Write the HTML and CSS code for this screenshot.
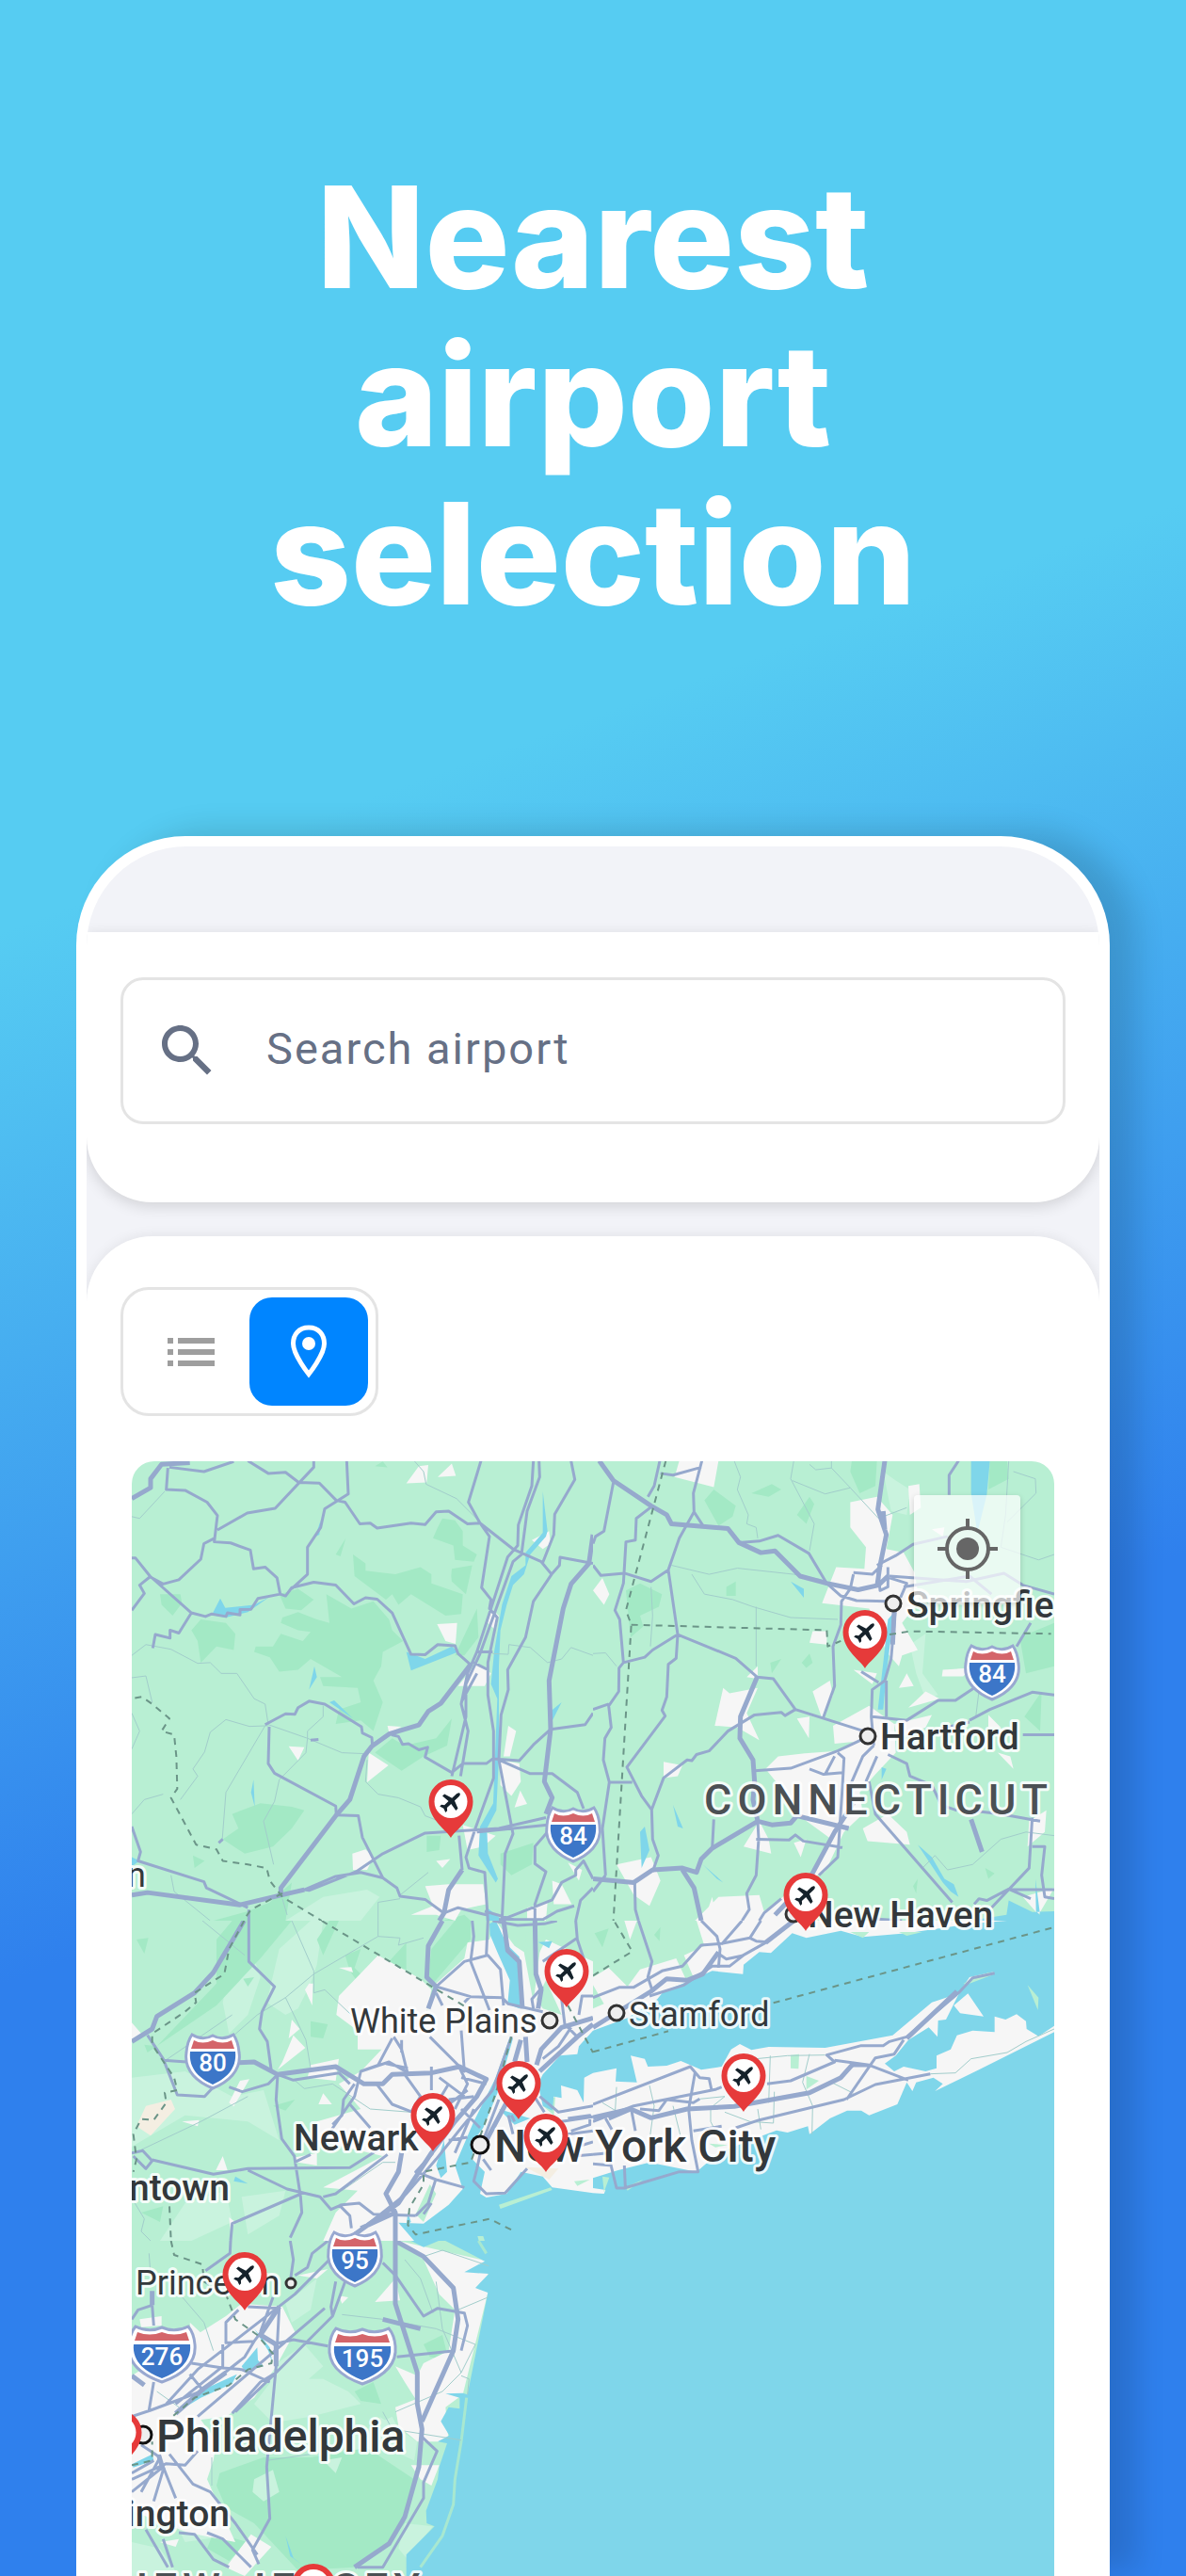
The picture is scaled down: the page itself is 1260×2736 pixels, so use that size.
FILE: index.html
```html
<!DOCTYPE html>
<html lang="en">
<head>
<meta charset="utf-8">
<meta name="viewport" content="width=device-width, initial-scale=1">
<title>Nearest airport selection</title>
<link rel="stylesheet" href="styles.css">
</head>
<body>
<main class="promo">
  <h1 class="headline">Nearest<br>airport<br>selection</h1>

  <section class="phone" aria-label="App preview">
    <div class="screen">
      <div class="status-bar"></div>

      <header class="toolbar">
        <label class="search">
          <svg class="search-icon" viewBox="0 0 24 24" aria-hidden="true"><path d="M15.5 14h-.79l-.28-.27C15.41 12.59 16 11.11 16 9.5 16 5.91 13.09 3 9.5 3S3 5.91 3 9.5 5.91 16 9.5 16c1.61 0 3.09-.59 4.23-1.57l.27.28v.79l5 4.99L20.49 19l-4.99-5zm-6 0C7.01 14 5 11.99 5 9.5S7.01 5 9.5 5 14 7.01 14 9.5 11.99 14 9.5 14z"/></svg>
          <input class="search-input" type="search" placeholder="Search airport" aria-label="Search airport">
        </label>
      </header>

      <section class="results">
        <div class="view-toggle" role="group" aria-label="View">
          <button class="toggle-option" type="button" aria-label="List" aria-pressed="false">
            <svg class="toggle-icon" viewBox="0 0 60 60" aria-hidden="true"><path d="M6 15h6v6H6zM17 15h39v6H17zM6 27h6v6H6zM17 27h39v6H17zM6 39h6v6H6zM17 39h39v6H17z"/></svg>
          </button>
          <button class="toggle-option toggle-option--active" type="button" aria-label="Map" aria-pressed="true">
            <svg class="toggle-icon" viewBox="0 0 60 60" aria-hidden="true"><path d="M30 4C41 4 46.500 12 46.500 21C46.500 33 30 53.500 30 53.500S13.500 33 13.500 21C13.500 12 19 4 30 4Z" fill="none" stroke="currentColor" stroke-width="5"/><circle cx="30" cy="21" r="7"/></svg>
          </button>
        </div>

        <div class="map">
          <svg class="map-canvas" viewBox="140 1552 980 1184" role="img" aria-label="Map of airports around New York City">
            <defs>
              <g id="pin">
                <path d="M0 0C-3-7-23.500-19-23.500-38.500A23.500 23.500 0 0 1 23.500-38.500C23.500-19 3-7 0 0Z" fill="#e63a3a"/>
                <circle cy="-38.500" r="17.500" fill="#fff"/>
                <path transform="translate(0 -38.500) rotate(47)" d="M0-13C1.300-13 2-11 2-9V-3.500L10.500-0.500V2.500L2 1.500V7.500L4.500 9.500V12L0 10.500L-4.500 12V9.500L-2 7.500V1.500L-10.500 2.500V-0.500L-2-3.500V-9C-2-11-1.300-13 0-13Z" fill="#15222b"/>
              </g>
              <g id="shield">
                <path d="M-22-27Q-11-20 0-26Q11-20 22-27Q27-20 28-8C31 12 15 24 0 30C-15 24-31 12-28-8Q-27-20-22-27Z" fill="#fff" stroke="#98a8d0" stroke-width="3"/>
                <path d="M-20-21Q-11-16 0-21Q11-16 20-21L23-12H-23Z" fill="#d4656a"/>
                <path d="M-24-9H24C26 10 13 20 0 26C-13 20-26 10-24-9Z" fill="#3c76c8"/>
              </g>
              <g id="shield-wide">
                <path d="M-28-28Q-14-21 0-27Q14-21 28-28Q34-21 35-9C37 12 20 24 0 31C-20 24-37 12-35-9Q-34-21-28-28Z" fill="#fff" stroke="#98a8d0" stroke-width="3"/>
                <path d="M-26-22Q-13-17 0-22Q13-17 26-22L29-13H-29Z" fill="#d4656a"/>
                <path d="M-30-9H30C32 10 16 21 0 27C-16 21-32 10-30-9Z" fill="#3c76c8"/>
              </g>
            </defs>

            <rect class="land" x="140" y="1552" width="980" height="1184"/>
            <rect class="water" x="628" y="2380" width="492" height="356"/>

            <!-- Catskills and the upper Hudson -->
            <svg x="130" y="1540" width="500" height="500" viewBox="0 0 1500 1306" preserveAspectRatio="none">
              <path class="forest" d="M735 290L775 315V335L870 345L950 325L985 345V370L1085 400L1080 455L1030 460L920 400L880 430L860 400L840 415L740 350ZM990 245L1005 215L1020 190L1060 195L1085 225V265L1130 290L1120 310L1060 305L1055 265ZM1048 350L1050 330L1115 320L1095 400L1050 365ZM650 400L730 440L800 420L850 470L860 500L895 530L830 560L825 600L800 640L830 700L800 780L760 750L680 760L690 720L760 700L750 660L640 655L630 630L700 630L600 580L560 610L500 615L470 575L420 560L425 545L480 545L505 510L575 530L600 505L560 500L505 480L510 465L560 450L620 470L660 480ZM500 400L560 385L610 415L570 445L520 440ZM220 500L250 470L330 480L360 510L355 555L300 545L250 590L240 530ZM120 400L185 400L190 425L160 460L125 430ZM1060 570L1130 440L1135 520L1090 570ZM350 1010L440 980L540 990L580 1000L540 1050L480 1100L390 1120L320 1080L370 1050ZM805 840L860 800L900 820L1000 800L1050 745L1035 820L960 850L890 890ZM970 1070H1015L1010 1110L970 1115ZM1205 1120L1310 1090L1305 1150L1240 1180L1205 1150ZM680 290L712 245L695 295ZM805 45L830 32L845 48ZM225 1125L262 1140L230 1160ZM290 1306L400 1280L470 1255L540 1200L520 1306ZM1020 1306L1090 1290L1110 1306Z"/>
              <path class="meadow" d="M520 1306L640 1240L780 1220L820 1240L760 1306Z"/>
              <path class="urban" d="M905 93L945 45L975 42L970 90ZM1005 75L1050 38L1063 72ZM1003 483L1067 480L1062 538L1030 530ZM1305 250L1360 225L1365 260L1340 275ZM1070 655L1130 590L1175 620L1155 655ZM530 822L580 825L560 862ZM785 840L848 875L780 922ZM845 765L890 768L850 785ZM1230 765L1255 780L1235 850H1215ZM1205 860L1265 870L1270 920L1240 960L1205 930ZM1268 945L1290 982L1250 992ZM733 1120L775 1108L800 1130L780 1165H735ZM965 1210L1040 1205H1150L1160 1260L1080 1275L1060 1306L1000 1290H920L990 1265ZM1370 1195L1400 1205L1432 1260H1375ZM1085 1040L1190 1070L1150 1100L1100 1110ZM1000 1140L1045 1135L1020 1160ZM1420 1145L1465 1165L1455 1195ZM1175 440L1200 460L1190 500L1165 480ZM1290 1270L1355 1255L1350 1306H1290Z"/>
              <path class="water" d="M1340 115L1355 225L1350 240L1300 290L1280 345L1245 375L1225 430L1205 500L1200 600V850L1192 1000L1162 1050L1165 1120L1197 1190L1190 1200L1135 1125L1140 1045L1182 980L1195 690L1175 650L1185 560L1210 430L1240 350L1285 320L1285 285L1340 230ZM1160 1268L1205 1300V1306H1160ZM312 412L328 438L420 430L468 408L400 450L330 465L285 458ZM905 560L965 580L1050 545L1070 560L920 612ZM612 600L620 630L595 665ZM660 700L675 695L735 745ZM418 915L422 990L410 950ZM1400 700L1365 725L1368 755ZM30 1130L55 1140L30 1155ZM632 195L615 240L628 235Z"/>
              <path class="lane" d="M30 185L55 190L135 115M930 30L960 60L968 95L1065 135L1140 200M30 570L75 540L155 553L240 592L280 590L315 620H365L420 690L455 705L465 762M30 632L75 627L95 700M465 765L405 767L330 748L280 783L262 838L225 885L240 905L185 970M455 765L330 950L318 1085M465 762L590 800L700 840L780 843M590 800V780L640 740V710M590 800L585 840L500 915L485 975L450 1030L482 1150M780 860L775 920L815 955L880 965L950 990L965 1015L1040 1040M1180 565L1230 567L1232 540L1300 548L1355 590L1400 580L1430 548L1500 570M155 1180L165 1225L280 1306M885 1235L975 1172M815 1306V1255L885 1245M30 730L55 780L30 830M30 1010L70 970L130 955M510 1245L525 1290"/>
              <path class="road" d="M145 50L140 110L200 112L270 145L303 182L293 255L345 258L408 278L418 330L455 325L493 355L503 400L520 405L540 382L610 367L680 375L738 427L775 410L812 414L860 452L920 567L965 568L1005 540L1060 543L1070 565L1115 600M150 48L260 60L355 32M400 30L465 65L520 62L562 90L628 92L682 140L710 145L757 205L790 203L812 217L920 203L965 207L1000 172L1040 170L1100 205L1140 203L1245 275L1335 310L1368 345M610 30V48L487 162L398 175L303 222M715 30L720 122L645 163L632 215L590 270V345L540 385M293 245L260 260L250 303L180 360L130 372L88 352L55 375L70 398L30 445M30 300H42L88 350L220 452L265 462L285 455L330 462L335 452L375 458V443L410 442L432 412L503 400M220 452L180 508L152 500V522L105 512L97 550M1143 30L1103 145L1140 203L1170 240L1145 382L1175 415L1170 440L1195 465L1165 590V680L1183 780V910L1125 1050L1095 1130L1105 1160L1155 1172L1165 1306M1310 30L1305 100L1262 208L1260 265L1228 297L1130 560L1100 620L1080 705L1102 780L1078 905M1328 30L1330 75L1290 170L1272 290L1245 310L1140 565L1095 650V740L1050 905M1430 30L1442 82L1378 178L1375 235L1340 312M1500 315L1395 298L1393 320L1368 345L1310 420L1285 520L1228 610L1230 665L1207 735L1200 860L1245 1065L1220 1120L1210 1306M1500 730L1475 762L1365 775L1310 818L1265 862L1180 857L1160 870H1085M1200 860L1300 898H1370L1450 950L1470 995M455 762L520 732L550 733L560 715L595 697L645 705L762 768L765 785L795 798L797 822M468 768L465 870L485 897L680 988L682 1013L752 1015L765 1075L830 1187M858 790L880 795L893 817L912 815L945 832L973 825L965 852L1050 895L1085 870M1350 1020L1200 1050L965 1063L830 1120L745 1170L595 1222L580 1220L680 1183L760 1172L830 1187L875 1215L885 1238L965 1247L1025 1285L1070 1270L1160 1290M1355 1040L1130 1060M30 1045L58 1115L50 1140L260 1198L268 1215L400 1270M403 1275V1306M1073 1070L1083 1165M1355 1060L1315 1100V1148L1350 1170L1315 1260V1306M1500 1215L1460 1250L1445 1306M1500 1190L1470 1140L1445 1165V1180L1400 1200L1370 1248L1220 1300M1155 1280L1260 1306M1200 1303H1340L1385 1280L1440 1265M1130 560H1180M600 805L625 803M1130 620L1080 700M1120 590L1165 610M307 1090L320 1080"/>
              <path class="road highway" d="M30 135L90 105V80L125 40L215 35M1110 595L1015 703L975 725L945 763L850 788L795 822L770 850L725 970L682 1013L505 1215V1235L375 1262L80 1228L30 1235M1500 235L1487 315L1430 372L1405 440L1360 640L1365 775L1345 920L1370 965L1350 1010M1083 1165L1040 1220L1025 1285L1010 1306M505 1235L580 1220"/>
              <path class="border" d="M40 688L62 685L95 705L150 745L125 780L165 790L172 850L175 940L155 965L235 1095L300 1108L320 1140L400 1150L460 1160L470 1195L510 1240L635 1306M510 1230L410 1275L385 1306"/>
            </svg>

            <!-- Connecticut -->
            <svg x="630" y="1540" width="500" height="500" viewBox="0 0 1500 1306" preserveAspectRatio="none">
              <path class="forest" d="M355 140L385 110L455 155L445 185L400 210ZM105 390L150 370L220 400L210 435L150 460L160 490L120 520ZM825 30H905L900 100L850 120L820 60ZM1360 520L1470 480V600L1380 620ZM505 120L570 95L600 110L560 130ZM650 180L690 130L705 150L680 205ZM1375 740L1430 670L1425 780ZM565 590L600 580L570 620ZM425 380L455 365V405H425ZM1265 30H1320L1325 80L1260 110ZM1020 1210L1035 1190L1030 1230ZM1250 1160L1280 1175L1260 1190ZM665 590L690 565L700 590L680 605Z"/>
              <path class="meadow" d="M925 60L965 85L1010 110L1000 180L950 170ZM1010 540L1060 510L1050 620L1100 680L1060 690L1030 620Z"/>
              <path class="urban" d="M275 30H400L385 103L260 75ZM820 145L905 130L955 180L935 275L990 285L1025 340L1040 420L985 480L1035 555L985 570L975 600L935 560L880 440L730 425L775 325L865 330L870 270L820 215ZM0 390L30 355L52 400L35 430ZM415 660L435 675L525 660L490 730L530 805L460 770L388 765ZM690 535L700 503H745V540ZM700 670L755 640L765 680L730 745ZM650 745L690 740L688 800ZM765 765L880 710L960 760L965 840L900 900L850 950L860 1010L800 1060L740 1170L690 1190L760 1080L650 1010L620 960L550 885L590 850L675 842L780 835L830 810L770 815ZM225 865L285 875L270 905L225 910ZM480 1100L530 1030L560 1080L568 1120ZM640 1090L680 1080L662 1130ZM75 1150L185 1130L215 1195L180 1265L130 1235ZM325 1306L400 1240L530 1235L545 1280L620 1230L700 1180L720 1240L700 1306ZM1005 715L1060 670L1105 690ZM975 660L1000 620L1022 655ZM1115 610L1205 605L1180 628H1112ZM1390 1030L1445 1000L1440 1060L1385 1100ZM1370 1240L1470 1215L1420 1290ZM1005 100L1040 95L1045 160L1010 180ZM860 1050L940 1010L1000 1060L1010 1095L875 1085ZM830 610L905 620L890 650ZM960 760L1080 735L1060 770L970 800ZM1260 735L1300 770L1260 770ZM1290 840L1330 850L1340 885ZM100 1306L110 1306L135 1320ZM490 630L525 600V635ZM360 1290L380 1240L388 1280ZM1080 220L1120 215L1115 240Z"/>
              <path class="water" d="M1205 30H1265L1255 125L1225 230L1205 120ZM630 365L672 385V410ZM150 1060L165 1045L180 1110L155 1160ZM255 985L287 1050L270 1045ZM350 1150L415 1200L395 1190ZM940 470L960 450L935 620L925 720L908 720L925 590ZM920 880L935 885L920 915ZM1035 1095L1080 1130L1120 1190L1150 1205L1165 1240L1140 1225L1115 1200ZM1410 1190L1425 1290L1412 1280ZM1325 1250L1318 1290L1200 1306H1470V1280L1400 1282Z"/>
              <path class="lane" d="M450 30L470 75L460 110L495 180L490 205L520 215L525 245M640 30L630 80L705 205L690 280M635 85L740 122L820 105L760 50V30M820 105L910 190L1000 160M250 320L370 345L460 328L640 345L730 360M315 345L355 400L445 415L510 435L630 465L780 470M520 435V600M185 380L190 460L183 545M0 565L40 563L75 600M1325 30L1315 180L1300 270L1420 305L1470 290M1340 60L1410 80L1412 120L1320 200M1050 1160L1090 1125L1130 1165L1210 1150L1300 1080L1380 1060L1470 1070M1240 600L1220 740M690 40L710 55L760 50"/>
              <path class="road" d="M65 90L35 225L8 240L0 260M0 320L25 348L100 342L185 365L240 333L275 245L322 172L352 212M347 30L320 120L322 172M345 48L255 70L215 65M213 30L195 100L175 130M190 155L138 190L135 250L105 255L97 370L70 445L85 470L97 590L83 605L82 670L50 710L58 770L38 800L33 860L52 922L30 1050L40 1180M0 720L50 705M97 590L165 575L190 555L270 512L455 578L523 630L575 635L645 720L870 782M240 333L270 512L265 578L240 595L235 685L220 722L230 738L108 880L155 960L187 998L190 1080L208 1125L190 1170M645 720L612 737L600 728L515 735L430 780L370 835L330 845L315 862L300 860L225 910L187 998M52 922H125M465 257L530 253L590 237L688 287L745 370L790 405L840 418L935 420M905 320L965 293L1020 262L1130 240M940 325V380L915 390L908 330M830 340L890 345L920 320M830 345L820 385L792 420L790 485L765 545L770 655L733 745M965 430L950 580L930 640L890 665L887 740L895 820M935 640V740M855 615L910 645M890 740L1000 750L1100 695H1155L1215 660M1200 750L1265 720L1400 672L1470 680M1100 775L1200 755M1370 790H1470M1350 545L1395 480M945 350L1190 365L1310 342L1370 375L1470 400M945 355L1000 370L980 410M990 380L1200 350L1270 400M1135 125V70L1165 30M515 890L630 883L780 835L865 800M780 840L800 855L795 935L780 1130L720 1180M740 900L770 850M690 885L735 900L795 895M905 850L870 920M895 820L860 850L820 930M880 920L900 1010L1145 1255M940 845L1000 870L1010 905L1080 930L1110 985L1160 1000M1200 1000L1300 1010L1425 1030M1400 1020L1390 1160L1270 1270M1400 1100H1440L1430 1180L1440 1240L1470 1245M1320 1220H1470M1215 1260L1230 1245L1255 1250L1325 1218L1395 1245M385 1025L380 1105M520 1080L625 1082L645 1068L670 1085L795 1103M133 1200L135 1275L145 1306M525 1030L528 1080L520 1180L490 1230L498 1275L475 1306M0 1225L40 1180M885 1300L985 1306M600 1245L545 1285L530 1306"/>
              <path class="road highway" d="M20 30L65 85L185 155L235 180L250 205L430 218L465 257L535 285L580 280L660 350L745 370L845 388L910 375L940 350M930 30L908 165L935 235L915 320L905 380M523 630L470 740L468 800L510 860L515 920L510 970L525 1030M830 980L770 1060L690 1190L640 1235L580 1290M0 1190L130 1200L190 1165L285 1160L330 1172L345 1135L380 1105L525 1030L570 1040L630 1035L650 1015L815 1050M285 1165L322 1215L345 1306M925 170L930 220M960 450L955 540M1205 1025L1240 1115"/>
              <path class="border" d="M232 30L105 445L122 485L65 1306M122 485L745 500L748 545L790 530M945 512L1010 503L1460 510"/>
            </svg>

            <!-- New Jersey and New York City -->
            <svg x="130" y="2040" width="500" height="340" viewBox="0 0 1500 1020" preserveAspectRatio="none">
              <path class="meadow" d="M500 90L600 0H640L620 140L600 200L560 280L520 300L460 260ZM30 500L200 480L350 560L450 540L500 700L400 640L200 620L30 720ZM350 120L400 60L440 180L400 300L340 360L320 260ZM200 900L330 860L350 960L220 1020H120ZM380 880L520 860L500 940L400 1000Z"/>
              <path class="forest" d="M110 400L300 200V60L350 0H540L440 120L300 270L80 420L70 395ZM45 60L83 55L70 105ZM600 320L655 330L640 375L600 370ZM985 90L1060 0H1110V60L990 200L975 180ZM905 70L840 140L905 155ZM385 185L420 180L400 210ZM620 60L660 0H690L640 110ZM710 110L760 90L740 150L770 180L750 195L725 160ZM480 590L550 570L520 605ZM60 930L130 910L120 960Z"/>
              <path class="urban" d="M815 110L950 185L985 220L970 290L1000 200L1090 120L1100 70L1170 60L1190 0L1250 80L1280 100L1310 260L1330 100L1350 60L1500 130V1020H640L680 930L750 860L640 850L830 750L620 700V640L760 600L690 520L760 480L860 375L840 410H750V350L682 300L690 240ZM540 315L565 345L530 375ZM545 365L583 405L495 475L510 450ZM640 550L668 585H625ZM595 200H608L605 270L582 220ZM375 510L405 505L355 592L340 580ZM190 640L245 635L240 655ZM320 750L335 795H298ZM30 325L65 365L30 385ZM590 500L600 460L690 440L680 510ZM690 150L730 148L735 165ZM545 755L620 740V780L560 770ZM340 945L360 960L345 990Z"/>
              <path class="land" d="M1285 40L1345 20L1340 60L1310 180L1290 120ZM1320 250L1350 190L1400 300L1340 280ZM980 840L1000 870L960 960L935 935ZM1340 590L1380 560L1375 620Z"/>
              <path class="sand" d="M75 590L155 570L168 600L90 685L45 655ZM1285 785L1390 790L1360 825Z"/>
              <path class="water" d="M1190 0L1200 20L1225 75L1265 115L1275 200L1270 260L1265 280L1228 265L1235 190L1195 100L1172 45L1170 10ZM1235 370L1245 375L1195 550L1150 660L1120 700L1115 760L1155 800L1140 870L1160 882L1225 870L1270 800L1340 815L1370 850L1500 868V1020H930L880 962L960 965L1040 905L1085 855L1060 780L1120 640L1190 500ZM1500 350L1455 400L1450 425L1395 430L1340 490L1325 520L1340 590L1370 605L1375 560L1400 565L1398 525L1450 540L1470 580L1472 500L1500 485ZM1025 700L1035 800L1015 820L1000 780ZM1325 68L1370 65L1360 88ZM360 815L400 838L355 830ZM1200 600L1300 630L1250 650ZM910 930L920 960L905 970Z"/>
              <path class="land" d="M1200 905L1365 850L1370 858L1205 918ZM1440 830L1490 825L1450 845ZM1132 1005H1150L1155 1020H1136Z"/>
              <path class="lane" d="M255 0L390 110M540 0L610 160V230M815 0V50L610 170L520 245L430 300L350 370M815 50L885 55L880 78L960 55M520 245L585 380L600 470M610 230L645 220L740 310M400 560L250 640L60 730M545 505L580 535L670 520L790 600L920 610M130 450L350 300M40 900L70 950L60 990L90 1020M700 860L830 770H870"/>
              <path class="road" d="M403 0V130L485 210L445 290L437 345L462 385L475 480L495 490M80 365L130 440L175 555L262 560L290 530M130 445L205 450M495 490L545 508L690 485L725 520M340 530L382 545L465 520L495 490L490 570L508 695L548 750L568 880L572 930L535 1010M30 740L65 733L95 765L75 790L35 750M95 762L290 808L400 790L725 787L830 720M400 795L525 855L630 880L665 920L700 905L755 900L800 935L935 940M570 870L350 965L345 1020M640 880L680 870L845 745M548 770L600 745M865 370L890 410L910 490M860 375L815 460L760 480L740 560L650 690M890 380V420M840 455L910 470M760 480L850 450L920 490M725 585L790 660M740 520L705 570L700 620L670 650M810 520L860 585L925 610M980 370L1090 480L1080 350M985 465V540M1075 470L1100 520L1060 600M1080 600L1140 660M990 740L935 800L1000 825L1090 850M1180 540L1080 660L1000 760L905 870L760 985M1000 820L975 900L935 940M985 900L960 935M1240 370L1180 540M1200 570L1150 700L1130 790L1120 830L1160 870L1220 868L1290 790M1150 760L1175 795M1230 620L1245 680M1300 540L1345 610M1115 0L1120 50L1110 130L1170 285M1000 210L1090 130L1165 110L1205 155L1215 270M1000 210L1110 242L1210 245L1230 265L1340 290M1000 230L1020 270M1090 260L1110 240M1165 0L1160 110M1445 0L1450 60L1480 150M1450 55L1340 130M1400 250L1410 330L1450 370M1500 240H1465L1455 300M1310 280L1305 250L1340 210M1330 560L1390 610L1500 590M1400 640L1500 625M1420 680L1500 670M1420 630L1490 620V650L1430 670M1440 750L1500 745M1450 720L1500 705M1180 0L1260 15L1345 10L1385 0M1080 500L1160 520M1040 570L1120 560M1020 600L1100 540M1060 740L1120 600M1040 520L980 620M1010 500L1090 560M690 905L725 940L730 980M1340 440L1390 400L1430 340M1040 700L1100 690M900 490L950 560L920 610M1250 640L1240 620"/>
              <path class="road highway" d="M388 0L290 165L230 230L110 305L95 345L30 385M370 452L420 450L495 490L680 465L770 520H830L860 490L985 485L1075 465L1160 505L1130 560L1060 640L985 740L880 900L740 1000M890 740L880 800L840 870L870 930V1020M1020 0L975 80L970 180L1000 210L975 280M1215 0L1228 95L1265 130L1275 280M1315 0L1318 170L1335 220L1325 280M1500 330L1450 370L1330 480M1270 380L1250 450M1285 370L1290 450M1320 460L1335 410L1400 340L1500 310M870 930L760 980M1240 550L1160 700"/>
              <path class="border" d="M635 0L1090 272M388 0L340 90L325 170L230 230L235 260L200 290L95 360V395L165 500L175 540L135 548L140 580L100 635L60 632L35 680L45 760L35 800M150 910L155 1020M1240 370L1190 550L1150 660L1110 770L960 800V840L915 915L910 970L935 1000L1170 950L1250 990M1420 270L1500 420"/>
            </svg>

            <!-- Long Island Sound and Long Island -->
            <svg x="630" y="2040" width="500" height="400" viewBox="0 0 1500 1200" preserveAspectRatio="none">
              <path class="water" d="M0 0H1500V1200H0Z"/>
              <path class="urban" d="M0 0H1320L1200 10L1000 40L860 52L790 32L680 55L635 40L567 103L530 100L480 140L478 170L380 160L300 195L225 225L205 250L110 310L0 350ZM0 485L75 470L72 512L140 515L120 430L165 440L175 465L235 462L280 447L345 475L410 465L440 410L468 393L505 412L560 402L740 405L955 365L1080 260L1165 232L1200 180L1280 162L1200 195L1165 235L1125 315L1100 318L1098 370L1070 340L1005 380L965 430L930 455L960 480L990 465L1060 480L1095 470V430L1140 410L1160 365L1210 350L1280 355V305L1315 315L1350 298L1380 320L1382 345L1420 368L1470 335V355L1230 475L1090 543L1115 520L1085 500L1030 515L1018 543L1000 515L970 585L880 620L855 605H810L755 630L690 680L685 655L620 675L585 668L500 700L400 740L330 800L180 770L80 795L0 820ZM1150 270L1195 232L1245 305L1170 295ZM0 852L40 858L35 870L0 868Z"/>
              <path class="land" d="M0 0H330L355 80L290 110L320 180L300 195L265 120L150 155L110 210L50 150L0 180ZM0 205L35 265L0 280ZM630 428L657 425L655 472L630 470ZM680 495L720 510L680 538ZM1385 205L1420 245L1418 285ZM1180 200L1260 165L1280 170L1200 200ZM820 36H880L860 55ZM975 36H1050L1000 48ZM370 710L430 715L390 722ZM30 815L52 818L35 865ZM105 848L160 825L110 860Z"/>
              <path class="forest" d="M5 40L50 25L30 85ZM195 45L215 20L212 65Z"/>
              <path class="urban" d="M100 0H140L118 60Z"/>
              <path class="lane" d="M180 525L195 590L180 700M565 430L560 580M690 425L668 515L700 590L698 680M255 590L280 690M375 600V640L400 690M370 600L420 560L340 568M1075 488L1155 485L1205 440L1320 420L1380 385L1470 345M520 440L620 430L740 428M420 610L500 640L575 645L578 545M75 530L70 620M760 515L830 550M525 600L535 665M30 580L80 610"/>
              <path class="road" d="M0 245L85 212H130L220 160L285 145L345 78L410 73L500 55L535 0M145 0L188 130L175 180L190 225M180 240L290 205L380 145H435L480 110M345 0L395 50L405 90L400 150M400 105L425 122L475 112L550 70M475 0L410 75M500 55L520 65L555 68M0 585L310 465L340 500L370 503L378 540M325 485L305 600L315 700L335 800H275L100 852H75L55 770M0 640L130 590L390 538L410 530M555 520L630 510L770 450L745 428L855 398H925L945 385L1000 370L1165 230L1210 182L1280 167M990 380L960 425L900 437L808 570M770 445L880 460L1005 508M820 462H880M455 660L530 635L800 570L900 522L1075 488M150 600L210 605L235 570L320 580L340 568M120 590L135 670M100 780L103 850M40 630L60 665M320 670L410 655M0 745L50 740M0 775L60 780"/>
              <path class="road highway" d="M0 340L185 225L235 185L300 190L350 170L400 100M550 70L640 0M0 627L120 600L185 628L300 600L450 592L690 548L790 500L830 455M1000 375L1160 225M50 630L120 600"/>
              <path class="border" d="M0 418L240 352M575 262L1465 22M70 5L125 98L0 175"/>
            </svg>

            <!-- Philadelphia and the Jersey Shore -->
            <svg x="130" y="2380" width="500" height="356" viewBox="0 0 1500 1068" preserveAspectRatio="none">
              <path class="meadow" d="M480 440H640L720 480L760 520L600 560L480 580L420 520ZM420 440L580 330L640 400L560 470ZM820 560L940 640L930 700L840 660ZM700 640L860 560L900 640L760 680ZM900 900L990 910L905 1010L880 980ZM150 860L280 870L330 940L200 960ZM520 200L620 120L600 220L540 260ZM30 960L120 980L180 1068H30Z"/>
              <path class="forest" d="M310 740L450 690H600L780 660L930 760L900 900L850 960L740 1040L560 1050L420 900L330 850L300 780ZM740 480L800 450L825 520L760 510ZM960 330L1020 300L1040 380L980 370ZM290 930L400 960L340 1020L270 980Z"/>
              <path class="meadow" d="M420 760L480 730L500 800L450 830L415 800ZM640 700L700 690L680 740Z"/>
              <path class="urban" d="M880 0L1165 65V165L1085 490L1030 530L1040 640L940 640L880 590L870 530L935 505L900 450L870 400L940 430L960 390L1040 350L1060 220L1010 170L960 60ZM30 430L330 240L380 200L510 210L550 290L490 400L420 500L330 560L250 570L300 640L290 700L270 760L310 850L360 960L210 930L30 860ZM805 195L870 120L885 190ZM920 715L1010 715L985 780L950 760ZM410 935L475 975L390 1068L330 1040ZM55 250L125 240V270L60 275ZM215 260L300 340L230 400ZM560 110L655 90L620 120ZM690 175L720 180L700 200ZM120 960L180 950L170 975Z"/>
              <path class="water" d="M920 0L960 20L1020 -5L1155 65L1090 100L1168 105L1125 150L1165 165L1100 490L1085 485L1030 487L1075 500V535L1040 530L1015 575L1042 620L1005 640L1035 645L1010 720L1005 760L968 860L970 900L995 910L905 1000V1068H1500V0ZM30 712L95 680L100 700L35 722ZM170 548L250 478L365 425L350 455L250 500ZM380 400L430 340L432 380L450 400L390 415ZM520 940L545 1010L570 1030L535 1005ZM655 975L690 1040ZM420 280L470 340L478 390L465 350Z"/>
              <path class="shore" d="M1097 500L1080 640L1060 760L1055 840L1020 940L950 1040M1135 0L1160 40"/>
              <path class="lane" d="M140 120L260 260L290 350M700 235L830 250L1000 280L1125 330L1080 420L1020 480L870 545M1000 130L1020 280L1080 420M1070 220L1165 180M960 50L1020 30L1168 80M830 545L860 600L1080 635M285 690V780M110 480L180 530M460 700L600 680M900 60L950 120L990 230M1080 430L1105 440L1100 490M85 40L90 110"/>
              <path class="road" d="M345 0L343 40L265 95M535 0L545 60L535 130M830 70L870 110L960 240L1005 215L1090 230L1100 270L1080 350M875 370L1060 350M955 625L1003 670L960 770V820L830 1040H750M655 0L605 40L590 85L550 110M660 60L550 170L240 410L140 520M710 130L670 240L490 420L360 545M680 130L665 210L670 240M645 215L240 560M480 330L545 315L655 335M500 210L490 400L475 560L460 720L470 885L415 985L435 1030M400 210L500 215L420 320L330 325V260L370 220M480 180L440 290M420 320L390 370L250 480L90 540L30 560M220 390L320 405L380 410L470 450M320 330V400L170 520M30 250L50 220L95 205M100 270L95 205M100 450L85 540M215 425L260 480M30 760L140 710L200 715L240 670M30 800L130 720L170 820M130 730L100 830M30 740L100 700M150 680L225 775L280 800L360 900L430 1000M75 920L145 1040M130 950L160 1040M180 930L230 935L290 1015L340 1040M270 930L320 950L410 1040M490 420L440 450L350 550M60 650L120 690L60 800"/>
              <path class="road highway" d="M870 0V200L940 420V520L955 600L945 720L900 880L850 965L740 1040M870 0L960 50L1055 150L1070 250L1055 350L955 575M830 250L950 280M30 430L70 460M95 205V160M500 210L440 300L490 330V400M170 550L260 470L330 420M115 680L130 730"/>
              <path class="border" d="M155 0L165 45L255 75L260 130L330 170L360 250L430 300L480 360L475 390L400 410L340 460L230 500L160 560M30 715L95 700V640"/>
            </svg>

            <g class="towns">
              <circle cx="949" cy="1703" r="8"/><circle cx="922" cy="1844" r="8"/><circle cx="843" cy="2033" r="8"/><circle cx="655" cy="2138" r="8"/><circle cx="584" cy="2146" r="8"/><circle cx="309" cy="2425" r="5"/>
              <circle class="city-dot" cx="510" cy="2278" r="9"/><circle class="city-dot" cx="152" cy="2586" r="9"/>
            </g>

            <g class="shields">
              <use href="#shield" x="609" y="1947"/><text x="609" y="1959">84</text>
              <use href="#shield" x="1054" y="1775"/><text x="1054" y="1787">84</text>
              <use href="#shield" x="226" y="2188"/><text x="226" y="2200">80</text>
              <use href="#shield" x="377" y="2398"/><text x="377" y="2410">95</text>
              <use href="#shield-wide" x="172" y="2499"/><text x="172" y="2512">276</text>
              <use href="#shield-wide" x="385" y="2501"/><text x="385" y="2514">195</text>
            </g>

            <g class="label label--state">
              <text x="748" y="1927">CONNECTICUT</text>
              <text x="452" y="2765" text-anchor="end">NEW JERSEY</text>
            </g>
            <g class="label label--town">
              <text x="155" y="2004" text-anchor="end">n</text>
              <text x="372" y="2159">White Plains</text>
              <text x="668" y="2152">Stamford</text>
              <text x="144" y="2437">Princeton</text>
            </g>
            <g class="label label--city">
              <text x="963" y="1718">Springfie</text>
              <text x="935" y="1858">Hartford</text>
              <text x="858" y="2047">New Haven</text>
              <text x="312" y="2284">Newark</text>
              <text x="244" y="2337" text-anchor="end">ntown</text>
              <text x="244" y="2683" text-anchor="end">ington</text>
            </g>
            <g class="label label--metro">
              <text x="525" y="2296">New York City</text>
              <text x="166" y="2604">Philadelphia</text>
            </g>

            <g class="pins">
              <use href="#pin" x="479" y="1952"/>
              <use href="#pin" x="919" y="1772"/>
              <use href="#pin" x="856" y="2051"/>
              <use href="#pin" x="602" y="2132"/>
              <use href="#pin" x="790" y="2243"/>
              <use href="#pin" x="551" y="2251"/>
              <use href="#pin" x="460" y="2285"/>
              <use href="#pin" x="580" y="2307"/>
              <use href="#pin" x="260" y="2454"/>
              <use href="#pin" x="127" y="2622"/>
              <use href="#pin" x="333" y="2785"/>
            </g>
          </svg>

          <button class="locate" type="button" aria-label="Show my location">
            <svg class="locate-icon" viewBox="0 0 64 64" aria-hidden="true"><circle cx="32" cy="32" r="22" fill="none" stroke="currentColor" stroke-width="4"/><circle cx="32" cy="32" r="12"/><path d="M30 0h4v10h-4zM30 54h4v10h-4zM0 30h10v4H0zM54 30h10v4H54z"/></svg>
          </button>
        </div>
      </section>
    </div>
  </section>
</main>
</body>
</html>
```
FILE: styles.css
```css
* {
  box-sizing: border-box;
}

body {
  margin: 0;
  font-family: Roboto, "Liberation Sans", sans-serif;
  background: #2f80ed;
}

.promo {
  min-height: 100vh;
  padding: 168px 81px 0;
  overflow: hidden;
  background: linear-gradient(160deg, #56ccf2 31%, #2f80ed 66%);
}

.headline {
  margin: 0 0 216px;
  color: #fff;
  font-family: Inter, "Open Sans", sans-serif;
  font-size: 150px;
  font-weight: 800;
  line-height: 168px;
  text-align: center;
}

.phone {
  padding: 11px 11px 0;
  border-radius: 116px 116px 0 0;
  background: #fff;
  box-shadow: 28px -6px 32px rgba(0, 0, 0, 0.14);
}

.screen {
  overflow: hidden;
  border-radius: 106px 106px 0 0;
  background: #f2f3f8;
}

.status-bar {
  height: 91px;
}

.toolbar {
  position: relative;
  padding: 48px 36px 83px;
  border-radius: 0 0 70px 70px;
  background: #fff;
  box-shadow: 0 4px 16px rgba(0, 0, 0, 0.14);
}

.search {
  display: flex;
  align-items: center;
  height: 156px;
  padding: 0 32px;
  border: 3px solid #e4e4e4;
  border-radius: 24px;
  color: #667085;
}

.search-icon {
  flex: none;
  width: 72px;
  height: 72px;
  fill: currentColor;
}

.search-input {
  flex: 1;
  min-width: 0;
  margin-left: 48px;
  padding: 0 0 4px;
  border: 0;
  outline: 0;
  background: none;
  color: inherit;
  font: 400 47px/56px Roboto, "Liberation Sans", sans-serif;
  letter-spacing: 2px;
  appearance: none;
}

.search-input::placeholder {
  color: inherit;
  opacity: 1;
}

.results {
  margin-top: 36px;
  padding: 54px 48px 0;
  border-radius: 70px 70px 0 0;
  background: #fff;
  box-shadow: 0 0 14px rgba(0, 0, 0, 0.08);
}

.view-toggle {
  display: inline-flex;
  margin: 0 0 48px -12px;
  padding: 8px;
  border: 3px solid #e4e4e4;
  border-radius: 30px;
  vertical-align: top;
}

.toggle-option {
  display: grid;
  place-items: center;
  width: 126px;
  height: 115px;
  padding: 0;
  border: 0;
  border-radius: 24px;
  background: none;
  color: #9e9e9e;
}

.toggle-option--active {
  background: #0085ff;
  color: #fff;
}

.toggle-icon {
  width: 60px;
  height: 60px;
  fill: currentColor;
}

.map {
  position: relative;
  overflow: hidden;
  border-radius: 24px 24px 0 0;
}

.map-canvas {
  display: block;
  width: 100%;
  height: auto;
}

.locate {
  position: absolute;
  top: 36px;
  right: 36px;
  display: grid;
  place-items: center;
  width: 113px;
  height: 114px;
  padding: 0;
  border: 0;
  border-radius: 4px;
  background: rgba(255, 255, 255, 0.7);
  box-shadow: 0 2px 6px rgba(0, 0, 0, 0.16);
  color: #666;
}

.locate-icon {
  width: 64px;
  height: 64px;
  fill: currentColor;
}

/* Map layers */

.land { fill: #b8efd3; }
.forest { fill: #a3e9c5; }
.meadow { fill: #c9f3de; }
.urban { fill: #f6f6f6; }
.water { fill: #7fd6ea; }
.sand { fill: #f4eee2; }

.road,
.lane,
.border,
.shore {
  fill: none;
  stroke-linejoin: round;
  vector-effect: non-scaling-stroke;
}

.road {
  stroke: #96a9cd;
  stroke-width: 3px;
}

.highway {
  stroke-width: 5px;
}

.lane {
  stroke: #a2cdcb;
  stroke-width: 1px;
}

.border {
  stroke: #6b9588;
  stroke-width: 2px;
  stroke-dasharray: 7 6;
}

.shore {
  stroke: #a8e8d0;
  stroke-width: 3px;
}

.towns {
  fill: #eee;
  stroke: #333;
  stroke-width: 3px;
}

.city-dot {
  stroke: #111;
}

.shields {
  fill: #fff;
  font-size: 26px;
  font-weight: 500;
  text-anchor: middle;
}

.label {
  fill: #33383b;
  stroke: rgba(255, 255, 255, 0.85);
  stroke-width: 6px;
  stroke-linejoin: round;
  paint-order: stroke;
}

.label--town {
  font-size: 36px;
}

.label--city {
  font-size: 39px;
  font-weight: 500;
}

.label--metro {
  font-size: 48px;
  font-weight: 500;
}

.label--state {
  fill: #4b5054;
  font-size: 45px;
  font-weight: 500;
  letter-spacing: 6px;
}
```
